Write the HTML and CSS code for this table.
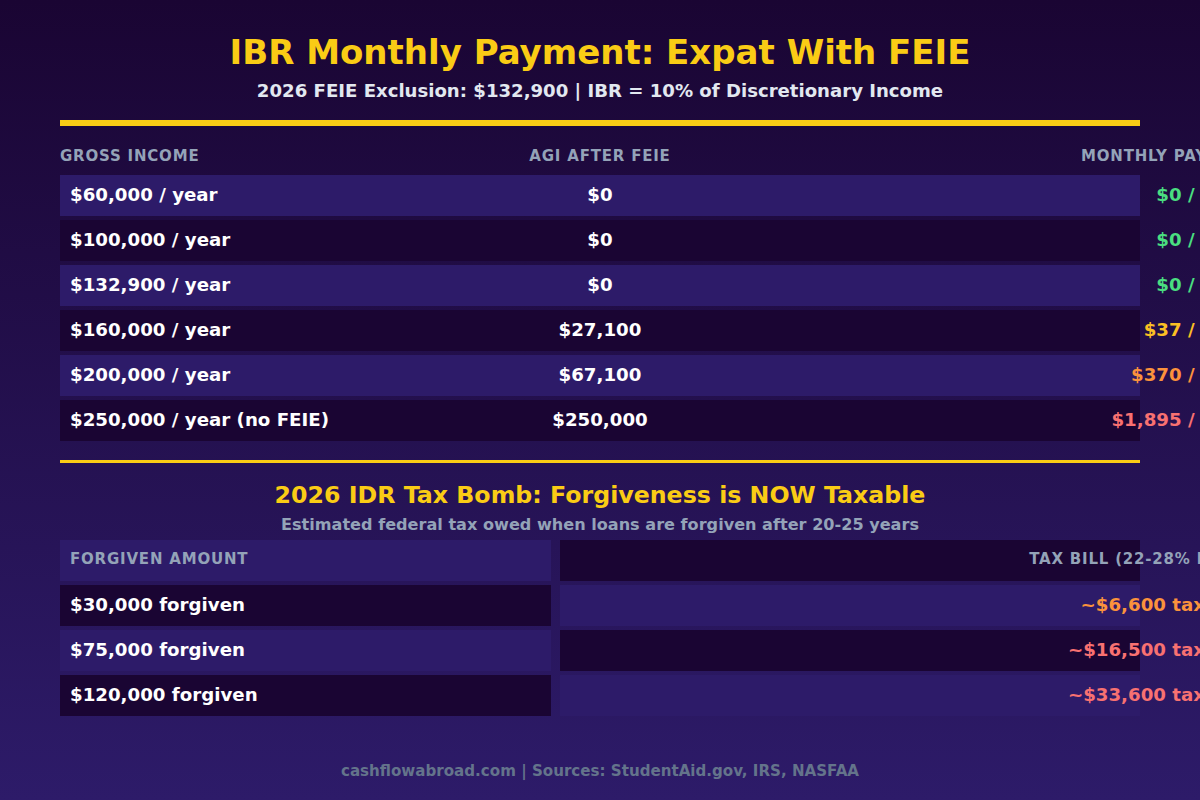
FILE: index.html
```html
<!DOCTYPE html>
<html lang="en">
<head>
<meta charset="utf-8">
<title>IBR Monthly Payment: Expat With FEIE</title>
<link rel="stylesheet" href="styles.css">
</head>
<body>
<div class="page">
  <header class="hero">
    <h1 class="title">IBR Monthly Payment: Expat With FEIE</h1>
    <p class="subtitle">2026 FEIE Exclusion: $132,900 | IBR = 10% of Discretionary Income</p>
  </header>
  <div class="rule rule-thick"></div>

  <section class="pay-table">
    <div class="pay-head">
      <span class="c1">GROSS INCOME</span>
      <span class="c2">AGI AFTER FEIE</span>
      <span class="c3">MONTHLY PAYMENT</span>
    </div>
    <div class="pay-row light"><span class="c1">$60,000 / year</span><span class="c2">$0</span><span class="c3 green">$0 / month</span></div>
    <div class="pay-row dark"><span class="c1">$100,000 / year</span><span class="c2">$0</span><span class="c3 green">$0 / month</span></div>
    <div class="pay-row light"><span class="c1">$132,900 / year</span><span class="c2">$0</span><span class="c3 green">$0 / month</span></div>
    <div class="pay-row dark"><span class="c1">$160,000 / year</span><span class="c2">$27,100</span><span class="c3 yellow">$37 / month</span></div>
    <div class="pay-row light"><span class="c1">$200,000 / year</span><span class="c2">$67,100</span><span class="c3 orange">$370 / month</span></div>
    <div class="pay-row dark"><span class="c1">$250,000 / year (no FEIE)</span><span class="c2">$250,000</span><span class="c3 red">$1,895 / month</span></div>
  </section>

  <div class="rule rule-thin"></div>

  <section class="bomb">
    <h2 class="bomb-title">2026 IDR Tax Bomb: Forgiveness is NOW Taxable</h2>
    <p class="bomb-sub">Estimated federal tax owed when loans are forgiven after 20-25 years</p>
  </section>

  <section class="tax-grid">
    <div class="cell light head">FORGIVEN AMOUNT</div>
    <div class="cell dark head right"><span class="over over-head">TAX BILL (22-28% bracket)</span></div>
    <div class="cell dark">$30,000 forgiven</div>
    <div class="cell light right"><span class="over orange">~$6,600 tax owed</span></div>
    <div class="cell light">$75,000 forgiven</div>
    <div class="cell dark right"><span class="over red">~$16,500 tax owed</span></div>
    <div class="cell dark">$120,000 forgiven</div>
    <div class="cell light right"><span class="over red">~$33,600 tax owed</span></div>
  </section>

  <footer class="footer">cashflowabroad.com | Sources: StudentAid.gov, IRS, NASFAA</footer>
</div>
</body>
</html>
```

FILE: styles.css
```css
html, body {
  margin: 0;
  padding: 0;
  overflow: hidden;
}

body {
  width: 1200px;
  height: 800px;
  background: linear-gradient(180deg, #1a0533 0%, #2d1b69 100%);
  font-family: "DejaVu Sans", Verdana, sans-serif;
  font-weight: bold;
  color: #ffffff;
}

.page {
  padding: 32px 60px 0;
}

.hero {
  text-align: center;
}

.title {
  margin: 0;
  font-size: 34px;
  line-height: 40px;
  color: #facc15;
}

.subtitle {
  margin: 8px 0 0;
  font-size: 18.1px;
  line-height: 22px;
  color: #e2e8f0;
}

.rule {
  background: #facc15;
}

.rule-thick {
  height: 6px;
  margin-top: 18px;
}

.rule-thin {
  height: 3px;
  margin-top: 19px;
}

.pay-table {
  display: flex;
  flex-direction: column;
  gap: 4px;
}

.pay-head,
.pay-row {
  display: grid;
  grid-template-columns: 1fr 1fr 1fr;
  white-space: nowrap;
}

.pay-head {
  margin-top: 20px;
  margin-bottom: 5px;
  font-size: 15px;
  line-height: 20px;
  letter-spacing: 0.8px;
  color: #94a3b8;
}

.pay-row {
  padding: 9px 10px 11px;
  font-size: 18.2px;
  line-height: 21px;
}

.c1 { text-align: left; }
.c2 { text-align: center; }
.c3 {
  justify-self: end;
  text-align: right;
}

.pay-head .c3 { margin-right: -118px; }
.pay-row .c3 { margin-right: -137px; }

.light { background: #2d1b69; }
.dark { background: #1a0533; }

.green { color: #4ade80; }
.yellow { color: #fbbf24; }
.orange { color: #fb923c; }
.red { color: #f87171; }

.bomb {
  text-align: center;
}

.bomb-title {
  margin: 18px 0 0;
  font-size: 23.7px;
  line-height: 28px;
  color: #facc15;
}

.bomb-sub {
  margin: 6px 0 0;
  font-size: 16.1px;
  line-height: 20px;
  color: #94a3b8;
}

.tax-grid {
  margin-top: 5px;
  display: grid;
  grid-template-columns: 491px 1fr;
  column-gap: 9px;
  row-gap: 4px;
  white-space: nowrap;
}

.cell {
  padding: 9px 10px 11px;
  font-size: 18.2px;
  line-height: 21px;
}

.cell.head {
  font-size: 15px;
  letter-spacing: 0.8px;
  color: #94a3b8;
}

.cell.right {
  display: flex;
  justify-content: flex-end;
}

.over {
  margin-right: -136px;
}

.over.over-head {
  margin-right: -144px;
}

.footer {
  margin-top: 46px;
  text-align: center;
  font-size: 15.1px;
  line-height: 18px;
  color: #64748b;
}
```
